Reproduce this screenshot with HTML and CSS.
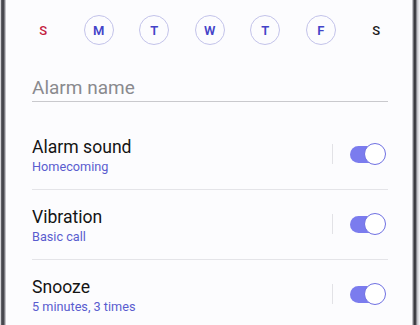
FILE: index.html
```html
<!DOCTYPE html>
<html>
<head>
<meta charset="utf-8">
<link rel="stylesheet" href="styles.css">
</head>
<body>
<div class="device">
  <div class="bezel bezel-left"></div>
  <div class="screen">
    <div class="days">
      <span class="day sun">S</span>
      <span class="day on">M</span>
      <span class="day on">T</span>
      <span class="day on">W</span>
      <span class="day on">T</span>
      <span class="day on">F</span>
      <span class="day sat">S</span>
    </div>
    <div class="content">
      <div class="name-field">Alarm name</div>
      <div class="row">
        <div class="text">
          <div class="title">Alarm sound</div>
          <div class="sub">Homecoming</div>
        </div>
        <div class="sep"></div>
        <div class="toggle"><span class="thumb"></span></div>
      </div>
      <div class="row">
        <div class="text">
          <div class="title">Vibration</div>
          <div class="sub">Basic call</div>
        </div>
        <div class="sep"></div>
        <div class="toggle"><span class="thumb"></span></div>
      </div>
      <div class="row">
        <div class="text">
          <div class="title">Snooze</div>
          <div class="sub">5 minutes, 3 times</div>
        </div>
        <div class="sep"></div>
        <div class="toggle"><span class="thumb"></span></div>
      </div>
    </div>
  </div>
  <div class="bezel bezel-right"></div>
</div>
</body>
</html>
```
FILE: styles.css
```css
* { box-sizing: border-box; }
html, body {
  margin: 0;
  padding: 0;
  width: 420px;
  height: 325px;
  overflow: hidden;
  background: #ffffff;
  font-family: Roboto, "Liberation Sans", Arial, sans-serif;
}
.device {
  display: flex;
  width: 420px;
  height: 325px;
}
.bezel-left {
  width: 6px;
  background: linear-gradient(to right, #d4d4d8 0, #d4d4d8 1px, #6a6a70 1px, #3c3c42 3px, #55555b 4px, #a8a8ae 5px, #e0e0e4 6px);
}
.bezel-right {
  width: 8px;
  background: linear-gradient(to right, #e6e6ea 0, #9a9aa0 1px, #45454b 2px, #2e2e34 3px, #5a5a60 4px, #b8b8be 5px, #e8e8ec 7px, #f4f4f6 8px);
}
.screen {
  flex: 1;
  background: #fcfcfe;
}
.days {
  display: grid;
  grid-template-columns: repeat(7, 55.5px);
  padding: 10px 0 0 9.5px;
  height: 50px;
  justify-items: center;
  align-items: center;
}
.day {
  width: 30px;
  height: 30px;
  border-radius: 50%;
  display: flex;
  align-items: center;
  justify-content: center;
  font-size: 13px;
  font-weight: 500;
}
.day.on {
  border: 1px solid #c3c3ea;
  color: #4343c8;
  font-weight: 600;
}
.day.sun { color: #c41c3e; }
.day.sat { color: #1a1a1a; }
.content {
  padding: 0 24px 0 26px;
}
.name-field {
  margin-top: 27px;
  font-size: 19px;
  line-height: 22px;
  color: #8a8a8e;
  padding-bottom: 2px;
  border-bottom: 1px solid #c9c9cd;
}
.row {
  display: flex;
  align-items: center;
  padding: 16px 0 13px;
  border-bottom: 1px solid #e4e4e8;
}
.name-field + .row { margin-top: 18px; }
.text { flex: 1; }
.title {
  font-size: 17.6px;
  line-height: 22px;
  color: #141414;
}
.sub {
  font-size: 12.7px;
  line-height: 18px;
  color: #5a5ccf;
}
.sep {
  width: 1px;
  height: 20px;
  background: #e2e2e6;
  margin: 0 17px 4px 0;
}
.toggle {
  position: relative;
  width: 36px;
  height: 22px;
  margin: 0 2px 4px 0;
}
.toggle::before {
  content: "";
  position: absolute;
  left: 0;
  top: 2.5px;
  width: 32px;
  height: 17px;
  border-radius: 9px;
  background: #7b7cee;
}
.thumb {
  position: absolute;
  right: 0;
  top: 0;
  width: 22px;
  height: 22px;
  border-radius: 50%;
  background: #ffffff;
  border: 1.5px solid #6f70e2;
}
```
